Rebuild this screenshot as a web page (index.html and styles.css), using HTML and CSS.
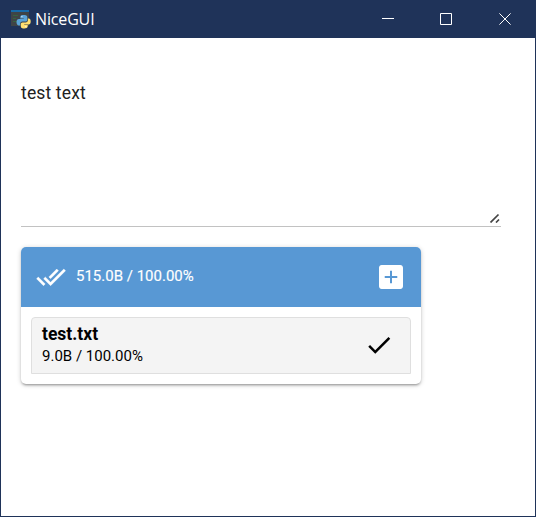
FILE: index.html
```html
<!DOCTYPE html>
<html lang="en">
<head>
<meta charset="utf-8">
<title>NiceGUI</title>
<link rel="stylesheet" href="styles.css">
</head>
<body>
<div class="window">
  <header class="titlebar">
    <svg class="app-icon" viewBox="0 0 20 20">
      <path fill="#3f4446" d="M0 1h18v16H0z"/>
      <path fill="#1669a8" d="M0 1h18v2H0z"/>
      <path stroke="#35633f" d="M2 6.500h5M2 9.500h3M2 12.500h4"/>
      <path fill="#5ba4d9" d="M12.300 6c-2 0-3 .6-3 2v1.400h3.500v.6H8c-1.500 0-2.500 1.200-2.500 3.200s1 3.200 2.300 3.200h1.400v-1.700c0-1.300 1-2.200 2.200-2.200h3.200c1 0 1.700-.8 1.700-1.800V8c0-1.400-1.500-2-4-2z"/>
      <path fill="#ffdf70" d="M16.900 9.500v1.700c0 1.300-1 2.200-2.200 2.200h-3.200c-1 0-1.700.8-1.700 1.800v2.200c0 1.400 1.500 2 3.500 2s3.400-.7 3.400-2V16h-3.500v-.5h4.500c1.300 0 2-1.300 2-3s-.7-3-1.800-3z"/>
      <circle cx="10.900" cy="7.700" r=".6" fill="#fff"/><circle cx="14.900" cy="17.600" r=".6" fill="#fff"/>
    </svg>
    <span class="title">NiceGUI</span>
    <svg class="control" viewBox="0 0 12 12"><path d="M0 5.500h12"/></svg>
    <svg class="control" viewBox="0 0 12 12"><path d="M.5.5h11v11H.5z"/></svg>
    <svg class="control close" viewBox="0 0 12 12"><path d="M.4.4l11.200 11.200M11.600.4L.4 11.600"/></svg>
  </header>
  <main class="content">
    <div class="textarea">
      <span>test text</span>
      <svg class="resize" viewBox="0 0 10 10"><path d="M.5 9.500l8-8M6 9.500l3-3"/></svg>
    </div>
    <section class="uploader">
      <div class="upload-header">
        <svg class="icon done-all" viewBox="0 0 24 24"><path d="M18 7l-1.410-1.410-6.340 6.340 1.410 1.410L18 7zm4.240-1.410L11.660 16.170 7.480 12l-1.410 1.410L11.660 19l12-12-1.420-1.410zM.41 13.410L6 19l1.410-1.410L1.830 12 .41 13.410z"/></svg>
        <span class="total">515.0B / 100.00%</span>
        <svg class="icon add" viewBox="0 0 24 24"><path d="M19 3H5c-1.110 0-2 .9-2 2v14c0 1.100.89 2 2 2h14c1.100 0 2-.9 2-2V5c0-1.100-.9-2-2-2zm-2.300 9.750h-3.950v3.950h-1.500v-3.950H7.300v-1.500h3.950V7.300h1.500v3.950h3.950z"/></svg>
      </div>
      <div class="files">
        <div class="file">
          <div class="info">
            <div class="name">test.txt</div>
            <div class="size">9.0B / 100.00%</div>
          </div>
          <svg class="icon" viewBox="0 0 24 24"><path d="M9 16.170L4.830 12l-1.420 1.410L9 19 21 7l-1.410-1.410z"/></svg>
        </div>
      </div>
    </section>
  </main>
</div>
</body>
</html>
```
FILE: styles.css
```css
* { box-sizing: border-box; }
body { margin: 0; font-family: Roboto, sans-serif; color: #000; }
svg { display: block; flex: none; }
.window {
  height: 517px;
  border: 1px solid #1f3359;
  border-top: 0;
  background: #fff;
  display: flex;
  flex-direction: column;
}
.titlebar {
  height: 38px;
  flex: none;
  background: #1f3359;
  color: #fff;
  display: flex;
  align-items: center;
  padding: 0 24px 0 10px;
}
.app-icon { width: 20px; height: 20px; margin-right: 4px; }
.title {
  flex: 1;
  font: 16px/20px "Open Sans", sans-serif;
  letter-spacing: -.15px;
}
.control {
  width: 12px;
  height: 12px;
  margin-left: 46px;
  fill: none;
  stroke: #fff;
}
.control.close { margin-left: 47px; }
.content { padding: 20px; }
.textarea {
  width: 480px;
  height: 169px;
  padding-top: 23px;
  border-bottom: 1px solid #c2c2c2;
  display: flex;
  justify-content: space-between;
  font-size: 17.500px;
  line-height: 24px;
  letter-spacing: .15px;
  color: #212121;
}
.resize {
  width: 10px;
  height: 10px;
  align-self: flex-end;
  margin: 0 1px 3px 0;
  fill: none;
  stroke: #444;
  stroke-width: 1.700;
}
.uploader {
  width: 400px;
  height: 137px;
  margin-top: 20px;
  border-radius: 5px;
  overflow: hidden;
  box-shadow: 0 1px 5px rgba(0,0,0,.2), 0 2px 2px rgba(0,0,0,.14), 0 3px 1px -2px rgba(0,0,0,.12);
}
.upload-header {
  height: 60px;
  padding: 0 14px 0 15px;
  background: #5898d4;
  color: #fff;
  display: flex;
  align-items: center;
}
.icon { width: 30px; height: 30px; fill: currentColor; }
.icon.done-all { stroke: currentColor; stroke-width: .3; }
.icon.add { width: 32px; height: 32px; }
.total {
  flex: 1;
  margin: -3px 0 0 10px;
  font-size: 15px;
  line-height: 20px;
  -webkit-text-stroke: .15px currentColor;
}
.files { padding: 10px; }
.file {
  height: 57px;
  padding: 0 16px 2px 10px;
  border: 1px solid #dfdfdf;
  border-radius: 4px 4px 0 0;
  background: #f4f4f4;
  display: flex;
  align-items: center;
}
.info { flex: 1; }
.name { font-size: 17.500px; line-height: 22px; font-weight: 700; }
.size { font-size: 15px; line-height: 22px; }
```
